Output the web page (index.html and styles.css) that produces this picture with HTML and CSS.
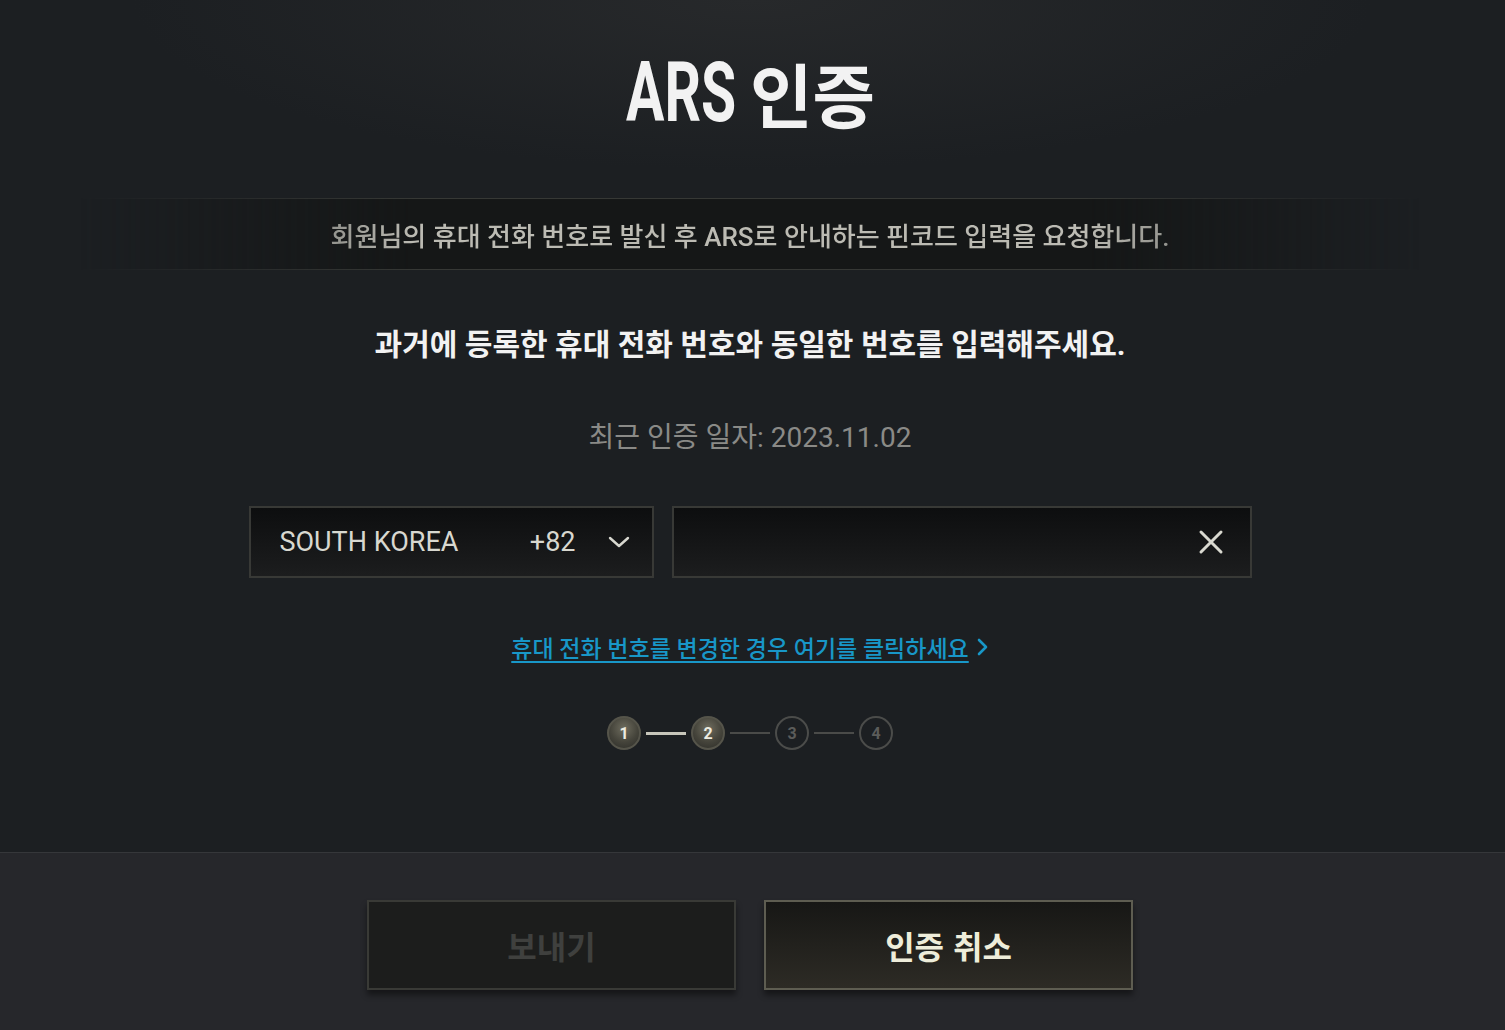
FILE: index.html
```html
<!DOCTYPE html>
<html lang="ko">
<head>
    <meta charset="UTF-8" />
    <meta name="viewport" content="width=device-width, initial-scale=1.0"/>
    <title>ARS 인증</title>
    <link rel="stylesheet" href="styles.css">
</head>
<body>
    <div class="page">
        <main class="content">
            <h1 class="title"><span class="title-en">ARS</span><span class="title-ko">인증</span></h1>

            <div class="notice">
                <p>회원님의 휴대 전화 번호로 발신 후 ARS로 안내하는 핀코드 입력을 요청합니다.</p>
            </div>

            <p class="lead">과거에 등록한 휴대 전화 번호와 동일한 번호를 입력해주세요.</p>
            <p class="last-date">최근 인증 일자: 2023.11.02</p>

            <!-- Phone number row -->
            <div class="phone-row">
                <div class="country-select">
                    <span class="country-name">SOUTH KOREA</span>
                    <span class="country-code">+82</span>
                    <svg class="chevron" width="22" height="14" viewBox="0 0 22 14">
                        <path d="M2 3 L11 11 L20 3" fill="none" stroke="#d8d8d0" stroke-width="2.4" stroke-linecap="round" stroke-linejoin="round"/>
                    </svg>
                </div>
                <div class="phone-input">
                    <input type="text" aria-label="휴대 전화 번호" />
                    <svg class="clear" width="26" height="26" viewBox="0 0 26 26">
                        <path d="M3 3 L23 23 M23 3 L3 23" fill="none" stroke="#d9d9d0" stroke-width="3" stroke-linecap="round"/>
                    </svg>
                </div>
            </div>

            <a class="change-link" href="#"><span>휴대 전화 번호를 변경한 경우 여기를 클릭하세요</span>
                <svg width="12" height="20" viewBox="0 0 12 20">
                    <path d="M2 3 L9 10 L2 17" fill="none" stroke="#1897c8" stroke-width="2.6" stroke-linecap="round" stroke-linejoin="round"/>
                </svg>
            </a>

            <!-- Steps -->
            <div class="steps">
                <span class="step done">1</span>
                <span class="step-line done"></span>
                <span class="step done">2</span>
                <span class="step-line"></span>
                <span class="step">3</span>
                <span class="step-line"></span>
                <span class="step">4</span>
            </div>
        </main>

        <footer class="actions">
            <button class="btn btn-disabled" disabled>보내기</button>
            <button class="btn btn-primary">인증 취소</button>
        </footer>
    </div>
</body>
</html>
```

FILE: styles.css
```css
body {
    margin: 0;
    padding: 0;
    background-color: #1c1f22;
    font-family: Roboto, "Noto Sans CJK KR", sans-serif;
    color: #f0f0f0;
}
.page {
    width: 1505px;
    height: 1030px;
    display: flex;
    flex-direction: column;
    overflow: hidden;
}
.content {
    height: 852px;
    padding-right: 5px;
    display: flex;
    flex-direction: column;
    align-items: center;
    background: radial-gradient(ellipse 620px 170px at 50% 0, #27292b 0%, rgba(28, 31, 34, 0) 100%), #1c1f22;
}
.title {
    margin: 48px 0 0;
    height: 90px;
    display: flex;
    align-items: center;
    color: #f2f2f2;
    font-weight: 700;
    line-height: 1;
}
.title-en {
    display: inline-block;
    font-family: Roboto, sans-serif;
    font-size: 84px;
    transform: scaleX(0.68);
    transform-origin: left center;
    margin-right: -38px;
}
.title-ko {
    display: inline-block;
    font-family: "Noto Sans CJK KR", sans-serif;
    font-size: 70px;
    transform: scaleX(0.97);
    transform-origin: left center;
    margin-right: -4px;
}
.notice {
    margin-top: 60px;
    width: 1340px;
    height: 70px;
    display: flex;
    align-items: center;
    justify-content: center;
    background: #151717;
    border-top: 1px solid #363835;
    border-bottom: 1px solid #363835;
    -webkit-mask-image: linear-gradient(to right, transparent 0, #000 25%, #000 75%, transparent 100%);
    mask-image: linear-gradient(to right, transparent 0, #000 25%, #000 75%, transparent 100%);
}
.notice p {
    margin: 0;
    color: #bcbbb3;
    font-size: 26px;
    font-weight: 500;
}
.lead {
    margin: 55px 0 0;
    line-height: 40px;
    font-size: 30px;
    font-weight: 700;
    color: #f2f2f2;
}
.last-date {
    margin: 53px 0 0;
    line-height: 40px;
    font-size: 28px;
    color: #8a8a87;
}
.phone-row {
    margin-top: 48px;
    display: flex;
    gap: 18px;
}
.country-select,
.phone-input {
    height: 72px;
    box-sizing: border-box;
    border: 2px solid #383936;
    background: linear-gradient(to bottom, #0d0e0f 0%, #1c1d1e 100%);
    display: flex;
    align-items: center;
}
.country-select {
    width: 405px;
    padding: 0 22px 0 29px;
    color: #d8d8d0;
    font-size: 27px;
}
.country-name {
    flex: 1;
}
.country-code {
    margin-right: 32px;
}
.phone-input {
    width: 580px;
    padding: 0 26px 0 20px;
}
.phone-input input {
    flex: 1;
    background: transparent;
    border: none;
    outline: none;
    color: #d8d8d0;
    font-size: 27px;
    font-family: inherit;
}
.change-link {
    margin-top: 54px;
    height: 30px;
    display: flex;
    align-items: center;
    gap: 8px;
    color: #1897c8;
    font-size: 23px;
    font-weight: 500;
    text-decoration: none;
}
.change-link span {
    text-decoration: underline;
    text-decoration-thickness: 2px;
    text-underline-offset: 4px;
}
.steps {
    margin-top: 54px;
    display: flex;
    align-items: center;
}
.step {
    width: 34px;
    height: 34px;
    box-sizing: border-box;
    border-radius: 50%;
    border: 2px solid #4b4c4a;
    display: flex;
    align-items: center;
    justify-content: center;
    font-size: 16px;
    font-weight: 700;
    color: #5b5c5a;
}
.step.done {
    border-color: #55544a;
    background: radial-gradient(circle at 50% 35%, #6e6c5e 0%, #45443b 55%, #2c2c28 100%);
    color: #ecebe0;
}
.step-line {
    width: 40px;
    height: 2px;
    margin: 0 5px;
    background: #4a4b49;
}
.step-line.done {
    height: 3px;
    background: #c7c6bb;
}
.actions {
    flex: 1;
    display: flex;
    justify-content: center;
    align-items: flex-start;
    gap: 28px;
    padding-top: 47px;
    padding-right: 5px;
    background: #26272b;
    border-top: 1px solid #35373a;
}
.btn {
    width: 369px;
    height: 90px;
    font-family: "Noto Sans CJK KR", sans-serif;
    font-size: 32px;
    font-weight: 700;
    box-shadow: 0 5px 6px rgba(0, 0, 0, 0.45);
    cursor: pointer;
}
.btn-disabled {
    background: #1c1d1c;
    border: 2px solid #393a36;
    color: #3f403e;
    cursor: default;
}
.btn-primary {
    background: linear-gradient(to bottom, #171715 0%, #2d2b25 100%);
    border: 2px solid #5e5d51;
    color: #eeedda;
}
```
